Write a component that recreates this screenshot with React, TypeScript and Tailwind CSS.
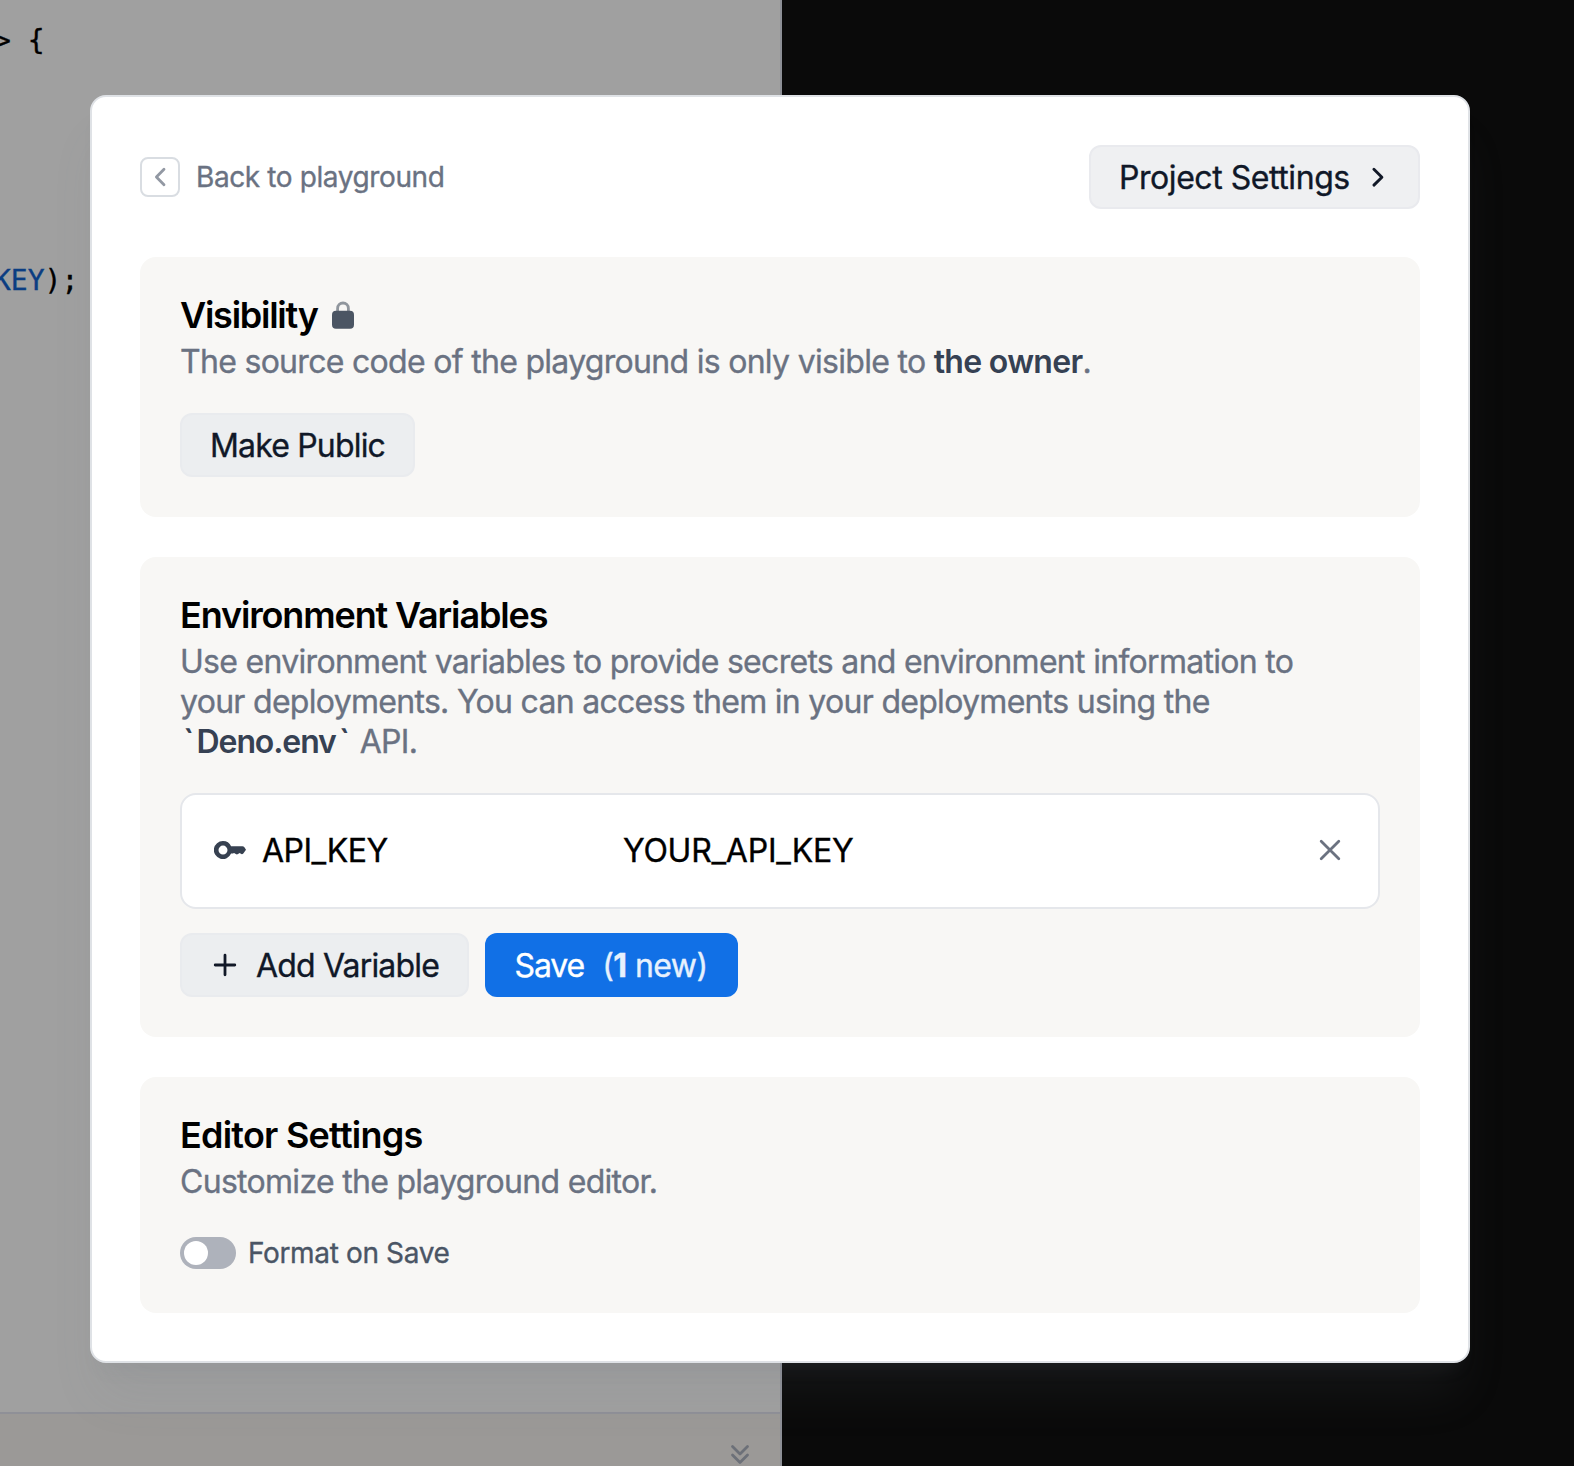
import React from "react";

const secondary =
  "flex h-16 items-center rounded-xl border-2 pt-0.5 text-[32px] leading-[40px] text-gray-900";

const muted = "border-[#e9ebee] bg-[#eceef0]";

const prose = "relative top-px text-[32px] leading-[40px] tracking-[-0.7px] whitespace-nowrap text-gray-500";

function Card({
  title,
  tracking,
  icon,
  children,
}: {
  title: string;
  tracking: string;
  icon?: React.ReactNode;
  children: React.ReactNode;
}) {
  return (
    <section className="rounded-2xl bg-[#f8f7f5] p-10">
      <h2 className="mb-2 flex h-9 items-start text-[36px] leading-[36px] font-semibold whitespace-nowrap text-black [-webkit-text-stroke:0px]">
        <span className={tracking}>{title}</span>
        {icon}
      </h2>
      {children}
    </section>
  );
}

export default function App() {
  return (
    <div className="relative flex h-[1466px] w-[1574px] overflow-hidden bg-[#0a0a0a] font-['Inter',sans-serif] antialiased [-webkit-text-stroke:0.35px]">
      <div className="flex w-[782px] flex-col border-r-2 border-[#8d8f96] bg-[#a0a0a0]">
        <pre className="-ml-[6px] flex-1 pt-[21px] font-['DejaVu_Sans_Mono',monospace] text-[28px] leading-[40px] text-black">
          {"> {\n\n\n\n\n\n"}
          <span className="text-[#0b3d82]">KEY</span>
          {");"}
        </pre>
        <div className="flex h-[54px] justify-end border-t-2 border-[#8f9097] bg-[#9b9997] pt-[27px] pr-[26px]">
          <svg width="28" height="28" viewBox="0 0 28 28" fill="none" stroke="#6c7078" strokeWidth="2.8" strokeLinecap="round" strokeLinejoin="round">
            <path d="M6.5 5.5l7.5 7.5 7.5-7.5M6.5 14l7.5 7.5 7.5-7.5" />
          </svg>
        </div>
      </div>

      <div className="absolute top-[95px] left-[90px] w-[1380px] rounded-2xl border-2 border-[#dfe2e6] bg-white p-12 shadow-[0_40px_50px_-10px_rgba(107,114,128,0.11),0_16px_20px_-12px_rgba(107,114,128,0.11)]">
        <header className="flex h-16 items-center justify-between">
          <div className="flex items-center">
            <button className="flex size-10 items-center justify-center rounded-lg border-2 border-[#d9dde2]">
              <svg width="20" height="24" viewBox="0 0 20 24" fill="none" stroke="#9298a3" strokeWidth="2.8" strokeLinecap="round" strokeLinejoin="round">
                <path d="M14 4.2L6.4 12l7.6 7.8" />
              </svg>
            </button>
            <span className="ml-4 text-[28px] leading-[40px] tracking-[-0.39px] text-gray-500">Back to playground</span>
          </div>
          <button className={`${secondary} w-[331px] justify-between border-[#e9eaee] bg-[#eff0f2] pr-[33px] pl-7`}>
            <span className="tracking-[-0.44px]">Project Settings</span>
            <svg className="-mt-0.5" width="16" height="24" viewBox="0 0 16 24" fill="none" stroke="#111827" strokeWidth="2.9" strokeLinecap="round" strokeLinejoin="round">
              <path d="M4.9 4.3l8 7.9-8 7.9" />
            </svg>
          </button>
        </header>

        <main className="mt-12 flex flex-col gap-10">
          <Card
            title="Visibility"
            tracking="tracking-[-1.25px]"
            icon={
              <svg className="mt-1 ml-3" width="26" height="30" viewBox="0 0 26 30">
                <path d="M7.6 12V7.4a5.4 5.4 0 0 1 10.8 0V12" fill="none" stroke="#4b5563" strokeOpacity="0.6" strokeWidth="2.8" />
                <rect x="2" y="9.8" width="22" height="17.9" rx="4" fill="#4b5563" />
              </svg>
            }
          >
            <p className={prose}>
              The source code of the playground is only visible to{" "}
              <b className="font-semibold text-gray-700 [-webkit-text-stroke:0px]">the owner</b>.
            </p>
            <button className={`${secondary} ${muted} mt-8 w-[235px] justify-center`}>
              <span className="tracking-[-0.82px]">Make Public</span>
            </button>
          </Card>

          <Card title="Environment Variables" tracking="tracking-[-1.14px]">
            <p className={prose}>
              Use environment variables to provide secrets and environment information to
              <br />
              your deployments. You can access them in your deployments using the
              <br />
              <b className="font-semibold text-gray-700 [-webkit-text-stroke:0px]">
                <span className="mr-[3px] ml-[3px]">`</span>
                <span className="tracking-[-1.1px]">Deno.env</span>
                <span className="mr-0.5 ml-[3px]">`</span>
              </b>{" "}
              API.
            </p>
            <div className="mt-8 flex h-[116px] items-center rounded-2xl border-2 border-gray-200 bg-white pr-[34px] pl-8">
              <svg className="-mt-0.5" width="33" height="20" viewBox="0 0 33 20" fill="#374151">
                <path fillRule="evenodd" d="M9 1a9 9 0 0 1 8.1 5.3H28.4q1.2 0 2 .9l1.6 2.6-2.7 3.7q-1.2 1.1-2.4.3l-1.2-.9-1.7 1.2q-1.1.7-2.2 0l-1.7-1.2-1.3.7H17.1A9 9 0 1 1 9 1Zm0 4.6a4.5 4.5 0 1 0 0 9 4.5 4.5 0 0 0 0-9Z" />
              </svg>
              <span className="ml-[15px] w-[361px] text-[32px] leading-[40px] tracking-[-0.5px] text-black">API_KEY</span>
              <span className="text-[32px] leading-[40px] tracking-[-0.25px] text-black">YOUR_API_KEY</span>
              <svg className="-mt-0.5 ml-auto" width="28" height="28" viewBox="0 0 28 28" fill="none" stroke="#6b7280" strokeWidth="2.8" strokeLinecap="round">
                <path d="M5.2 5.2l17.6 17.6M22.8 5.2L5.2 22.8" />
              </svg>
            </div>
            <div className="mt-6 flex gap-4">
              <button className={`${secondary} ${muted} w-[289px] pl-[31px]`}>
                <svg className="-mt-0.5" width="24" height="24" viewBox="0 0 24 24" fill="none" stroke="#111827" strokeWidth="2.8" strokeLinecap="round">
                  <path d="M12 2.2v19.6M2.2 12h19.6" />
                </svg>
                <span className="ml-[19px] tracking-[-0.83px] whitespace-nowrap">Add Variable</span>
              </button>
              <button className="flex h-16 w-[253px] items-center rounded-xl bg-[#1170e6] pt-0.5 pl-[29.5px] text-[32px] leading-[40px] whitespace-nowrap text-white">
                <span className="tracking-[-1.1px]">Save</span>
                <span className="ml-[18px] tracking-[-0.55px] text-[#e7f1fd]">
                  (<b className="font-bold">1</b> new)
                </span>
              </button>
            </div>
          </Card>

          <Card title="Editor Settings" tracking="tracking-[-0.77px]">
            <p className={prose}>Customize the playground editor.</p>
            <div className="mt-8 flex h-10 items-center">
              <div className="flex h-8 w-14 items-center rounded-full bg-[#aeb2bb] p-1">
                <div className="size-6 rounded-full bg-white" />
              </div>
              <span className="ml-3 text-[28px] leading-[40px] tracking-[-0.36px] text-gray-600">Format on Save</span>
            </div>
          </Card>
        </main>
      </div>
    </div>
  );
}
